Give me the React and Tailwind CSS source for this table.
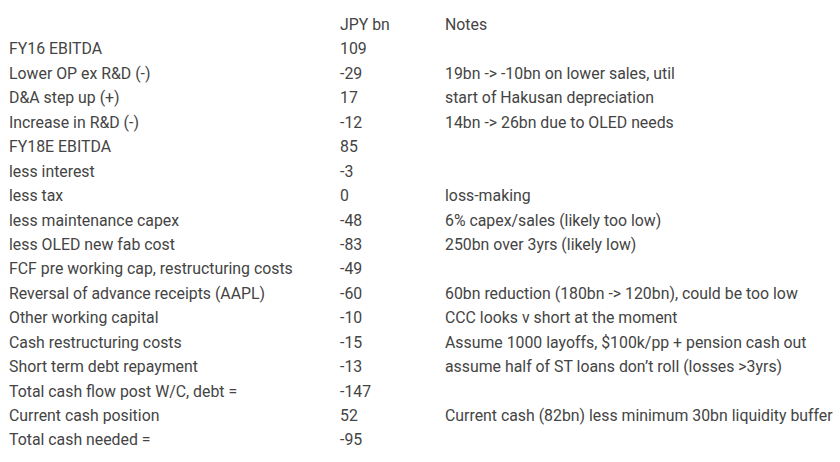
import React from "react";

const rows = [
  ["FY16 EBITDA", "109", ""],
  ["Lower OP ex R&D (-)", "-29", "19bn -> -10bn on lower sales, util"],
  ["D&A step up (+)", "17", "start of Hakusan depreciation"],
  ["Increase in R&D (-)", "-12", "14bn -> 26bn due to OLED needs"],
  ["FY18E EBITDA", "85", ""],
  ["less interest", "-3", ""],
  ["less tax", "0", "loss-making"],
  ["less maintenance capex", "-48", "6% capex/sales (likely too low)"],
  ["less OLED new fab cost", "-83", "250bn over 3yrs (likely low)"],
  ["FCF pre working cap, restructuring costs", "-49", ""],
  ["Reversal of advance receipts (AAPL)", "-60", "60bn reduction (180bn -> 120bn), could be too low"],
  ["Other working capital", "-10", "CCC looks v short at the moment"],
  ["Cash restructuring costs", "-15", "Assume 1000 layoffs, $100k/pp + pension cash out"],
  ["Short term debt repayment", "-13", "assume half of ST loans don\u2019t roll (losses >3yrs)"],
  ["Total cash flow post W/C, debt =", "-147", ""],
  ["Current cash position", "52", "Current cash (82bn) less minimum 30bn liquidity buffer"],
  ["Total cash needed =", "-95", ""],
];

function Row({ label, value, note }) {
  return (
    <div className="grid grid-cols-[331px_105px_1fr] h-[24.45px] leading-[24.45px] whitespace-nowrap">
      <span>{label}</span>
      <span>{value}</span>
      <span>{note}</span>
    </div>
  );
}

export default function App() {
  return (
    <div
      className="w-[840px] h-[462px] bg-white text-[#444] text-[15.85px] pt-[13px] pl-[9px] overflow-hidden"
      style={{ fontFamily: "Roboto, 'Liberation Sans', sans-serif" }}
    >
      <Row label="" value="JPY bn" note="Notes" />
      {rows.map(([label, value, note]) => (
        <Row key={label} label={label} value={value} note={note} />
      ))}
    </div>
  );
}
